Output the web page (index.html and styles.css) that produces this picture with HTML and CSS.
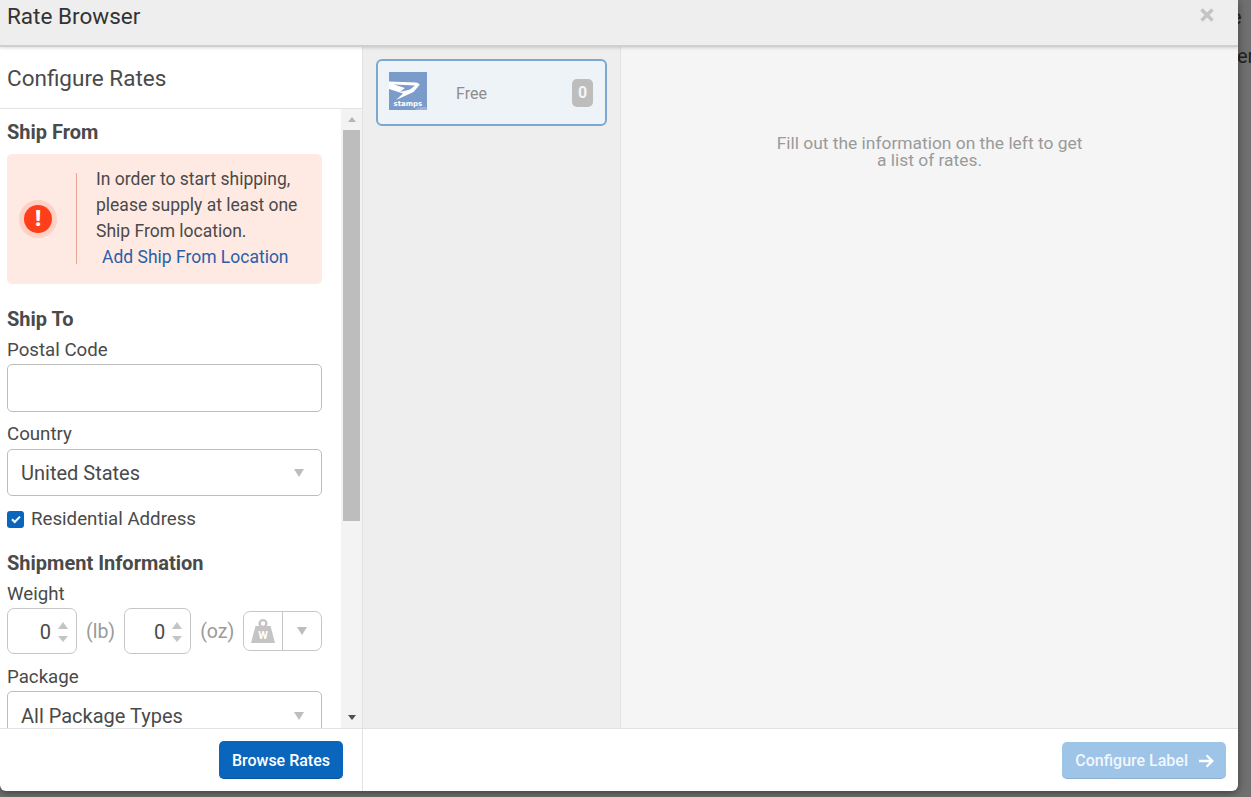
FILE: index.html
```html
<!DOCTYPE html>
<html lang="en">
<head>
<meta charset="utf-8">
<title>Rate Browser</title>
<link rel="stylesheet" href="styles.css">
</head>
<body>
<div class="page">
  <main class="modal">
    <header class="modal-head">
      <h1>Rate Browser</h1>
      <svg class="close" viewBox="0 0 14 14" width="14" height="14"><path d="M1.500 1.500l11 11M12.500 1.500l-11 11" stroke="#c4c4c4" stroke-width="3.400" fill="none"/></svg>
    </header>
    <div class="modal-body">
      <section class="config">
        <h2>Configure Rates</h2>
        <div class="scroll-wrap">
          <div class="form">
            <h3 class="first">Ship From</h3>
            <div class="alert">
              <div class="alert-icon"><span>!</span></div>
              <div class="alert-text">
                <p>In order to start shipping, please supply at least one Ship From location.</p>
                <a href="#">Add Ship From Location</a>
              </div>
            </div>
            <h3 class="ship-to">Ship To</h3>
            <label class="lbl">Postal Code</label>
            <div class="input"></div>
            <label class="lbl country">Country</label>
            <div class="input select"><span>United States</span><i class="tri"></i></div>
            <div class="check">
              <span class="box"><svg viewBox="0 0 16 16" width="16" height="16"><path d="M4 8.300l2.700 2.700L12 5.600" stroke="#fff" stroke-width="2" fill="none"/></svg></span>
              Residential Address
            </div>
            <h3 class="ship-info">Shipment Information</h3>
            <label class="lbl weight-lbl">Weight</label>
            <div class="weight">
              <div class="num n1"><span>0</span><b class="spin"><i class="up"></i><i class="down"></i></b></div>
              <span class="unit u1">(lb)</span>
              <div class="num n2"><span>0</span><b class="spin"><i class="up"></i><i class="down"></i></b></div>
              <span class="unit u2">(oz)</span>
              <div class="scale">
                <div class="scale-icon">
                  <svg viewBox="0 0 26 26" width="26" height="26"><path fill-rule="evenodd" d="M13 1a4.500 4.500 0 0 1 3.800 6.900h3.700L25 25H1L5.500 7.900h3.700A4.500 4.500 0 0 1 13 1zm0 2.300a2.200 2.200 0 1 0 0 4.400 2.200 2.200 0 0 0 0-4.400z" fill="#c4c4c4"/><text x="13" y="21" text-anchor="middle" class="w">W</text></svg>
                </div>
                <div class="scale-arrow"><i class="tri"></i></div>
              </div>
            </div>
            <label class="lbl package-lbl">Package</label>
            <div class="input select package"><span>All Package Types</span><i class="tri"></i></div>
          </div>
          <div class="scrollbar">
            <i class="sb-up"></i>
            <div class="thumb"></div>
            <i class="sb-down"></i>
          </div>
        </div>
        <footer class="foot-left"><button class="btn">Browse Rates</button></footer>
      </section>
      <div class="pane">
        <div class="pane-top">
          <section class="carriers">
            <div class="carrier">
              <svg class="logo" viewBox="0 0 38 38" width="38" height="38">
                <rect width="38" height="38" fill="#7b9ccb"/>
                <path d="M0 9.500L27 10.500Q31 11.500 30.500 13L24.500 20 7 28 14 21.500 0 17z" fill="#fff"/>
                <path d="M5 12.500L26 13.500 21 17.500 11 20 16 16z" fill="#7b9ccb"/>
                <text x="4.500" y="33.500" class="stamps">stamps</text>
                <text x="26.500" y="37.500" class="com">.com</text>
              </svg>
              <span class="free">Free</span>
              <span class="badge">0</span>
            </div>
          </section>
          <section class="results">
            <p>Fill out the information on the left to get a list of rates.</p>
          </section>
        </div>
        <footer class="foot-right">
          <button class="btn disabled">Configure Label
            <svg viewBox="0 0 16 14" width="16" height="14"><path d="M1 7h13.500M8.500 1.200L14.300 7l-5.800 5.800" stroke="#fff" stroke-width="2.300" fill="none"/></svg>
          </button>
        </footer>
      </div>
    </div>
  </main>
  <aside class="backdrop"><span class="bg1">e</span><span class="bg2">er</span></aside>
</div>
</body>
</html>
```

FILE: styles.css
```css
* { box-sizing: border-box; }
html, body { margin: 0; height: 100%; overflow: hidden; }
body { background: #707070; font-family: Roboto, "Liberation Sans", sans-serif; color: #4a4a4a; }
.page { display: flex; width: 1251px; height: 797px; }
.modal { width: 1238px; height: 791px; background: #fff; border-radius: 0 0 6px 6px; display: flex; flex-direction: column; overflow: hidden; flex: none; position: relative; z-index: 1; box-shadow: 0 2px 8px rgba(0, 0, 0, .45); }
.modal-head { height: 47px; background: #eeeeee; border-bottom: 2px solid #cfcfcf; box-shadow: 0 1px 3px rgba(0, 0, 0, .15); position: relative; z-index: 1; display: flex; justify-content: space-between; align-items: flex-start; padding: 3px 24px 0 7px; flex: none; }
.modal-head h1 { margin: 0; font-size: 22.500px; font-weight: 400; line-height: 26px; color: #333; }
.close { margin-top: 5px; }
.modal-body { flex: 1; display: flex; min-height: 0; }
.config { width: 363px; border-right: 1px solid #e2e2e2; display: flex; flex-direction: column; flex: none; }
.config h2 { margin: 0; height: 62px; padding: 17px 0 0 7px; font-size: 22.500px; line-height: 28px; font-weight: 400; border-bottom: 1px solid #e2e2e2; flex: none; }
.scroll-wrap { flex: 1; display: flex; min-height: 0; overflow: hidden; }
.form { width: 341px; padding: 0 19px 0 7px; flex: none; overflow: hidden; }
.scrollbar { width: 21px; background: #f3f3f3; display: flex; flex-direction: column; align-items: center; flex: none; }
.sb-up { width: 0; height: 0; border: 4.500px solid transparent; border-top: 0; border-bottom: 5px solid #b5b5b5; margin: 8px 0 8px; }
.thumb { width: 17px; height: 391px; background: #bdbdbd; }
.sb-down { width: 0; height: 0; border: 4.500px solid transparent; border-bottom: 0; border-top: 5px solid #505050; margin-top: auto; margin-bottom: 8px; }
h3 { margin: 0; font-size: 20px; line-height: 24px; font-weight: 700; color: #4a4a4a; }
h3.first { margin-top: 11px; }
.alert { margin-top: 10px; height: 130px; background: #ffe9e3; border-radius: 5px; display: flex; align-items: center; padding-left: 12px; }
.alert-icon { width: 38px; height: 38px; border-radius: 50%; background: #ffd0c5; display: flex; align-items: center; justify-content: center; flex: none; }
.alert-icon span { width: 28px; height: 28px; border-radius: 50%; background: #ff3f1a; color: #fff; font-size: 22px; font-weight: 900; line-height: 28px; text-align: center; }
.alert-text { margin: -2px 0 0 19px; padding-left: 19px; border-left: 1px solid #eba594; height: 91px; width: 228px; font-size: 17.500px; line-height: 26px; }
.alert-text p { margin: 0; position: relative; top: -7px; }
.alert-text a { color: #2a5fa8; text-decoration: none; padding-left: 6px; display: block; position: relative; top: -7px; }
h3.ship-to { margin-top: 23px; }
.lbl { display: block; font-size: 18.700px; line-height: 24px; }
.ship-to + .lbl { margin-top: 7px; }
.input { height: 48px; border: 1px solid #bdbdbd; border-radius: 5px; margin-top: 2px; background: #fff; }
.country { margin-top: 10px; }
.country + .input { margin-top: 3px; height: 47px; }
.select { display: flex; align-items: center; justify-content: space-between; padding: 1px 17px 0 13px; font-size: 20px; }
.package { padding-top: 2px; }
.tri { width: 0; height: 0; border: 5.500px solid transparent; border-bottom: 0; border-top: 8px solid #bdbdbd; flex: none; }
.check { display: flex; align-items: center; gap: 7px; font-size: 18.700px; line-height: 24px; margin-top: 11px; }
.box { width: 17px; height: 17px; background: #0a66bd; border-radius: 3px; display: flex; align-items: center; justify-content: center; }
h3.ship-info { margin-top: 20px; }
.weight-lbl { margin-top: 7px; }
.weight { display: flex; align-items: center; margin-top: 2px; height: 46px; }
.num { height: 46px; border: 1px solid #c6c6c6; border-radius: 7px; display: flex; align-items: center; justify-content: flex-end; font-size: 20px; padding: 1px 8px 0 0; gap: 7px; flex: none; }
.n1 { width: 70px; }
.n2 { width: 67px; }
.spin { display: flex; flex-direction: column; gap: 7px; align-items: center; }
.up { width: 0; height: 0; border: 5px solid transparent; border-top: 0; border-bottom: 7px solid #c4c4c4; }
.down { width: 0; height: 0; border: 5px solid transparent; border-bottom: 0; border-top: 6px solid #c4c4c4; }
.unit { color: #9a9a9a; font-size: 19.500px; flex: none; padding-top: 1px; }
.u1 { margin: 0 9px; }
.u2 { margin: 0 9px; }
.scale { width: 79px; height: 40px; border: 1px solid #c6c6c6; border-radius: 7px; display: flex; flex: none; }
.scale-icon { width: 39px; border-right: 1px solid #c6c6c6; display: flex; align-items: center; justify-content: center; }
.scale-arrow { flex: 1; display: flex; align-items: center; justify-content: center; }
.w { font: 700 11px Roboto, sans-serif; fill: #fff; }
.package-lbl { margin-top: 11px; }
.package-lbl + .input { margin-top: 2px; }
.foot-left { height: 63px; border-top: 1px solid #e2e2e2; display: flex; justify-content: flex-end; align-items: flex-start; padding: 12px 19px 0 0; flex: none; }
.btn { height: 38px; padding: 2px 13px 0; background: #0a66bd; border: 0; border-bottom: 1px solid #07539a; border-radius: 5px; color: #fff; font: 500 16px/36px Roboto, sans-serif; display: flex; align-items: center; gap: 10px; }
.btn.disabled { height: 37px; background: #9ec4e8; border-bottom-color: #8fb2d3; color: #f2f7fc; padding: 1px 12px 0 13px; }
.pane { flex: 1; min-width: 0; display: flex; flex-direction: column; }
.pane-top { flex: 1; display: flex; min-height: 0; }
.carriers { width: 258px; background: #eeeeee; border-right: 1px solid #e2e2e2; padding: 12px 0 0 13px; flex: none; }
.carrier { width: 231px; height: 67px; background: #eef3f7; border: 2px solid #7ba7d0; border-radius: 6px; display: flex; align-items: center; padding: 0 12px 0 11px; }
.logo { flex: none; margin-bottom: 4px; }
.stamps { font: 700 7px "DejaVu Sans", sans-serif; fill: #fff; }
.com { font: 400 4.500px "DejaVu Sans", sans-serif; fill: #dfe7f3; }
.free { margin: 2px 0 0 29px; font-size: 16px; color: #8d8d8d; flex: 1; }
.badge { width: 21px; height: 28px; background: #bdbdbd; border-radius: 5px; color: #f4f4f4; font-weight: 700; font-size: 16px; line-height: 28px; text-align: center; }
.results { flex: 1; background: #f5f5f5; display: flex; justify-content: center; padding-top: 88px; }
.results p { margin: 0; width: 312px; text-align: center; font-size: 17.400px; line-height: 17px; color: #9a9a9a; }
.foot-right { height: 63px; border-top: 1px solid #e2e2e2; display: flex; justify-content: flex-end; align-items: flex-start; padding: 13px 12px 0 0; flex: none; }
.backdrop { flex: 1; color: #222; font-size: 20px; display: flex; flex-direction: column; overflow: hidden; line-height: 24px; }
.bg1 { margin-top: 5px; margin-left: -7px; }
.bg2 { margin-top: 15px; margin-left: -1px; }
```
